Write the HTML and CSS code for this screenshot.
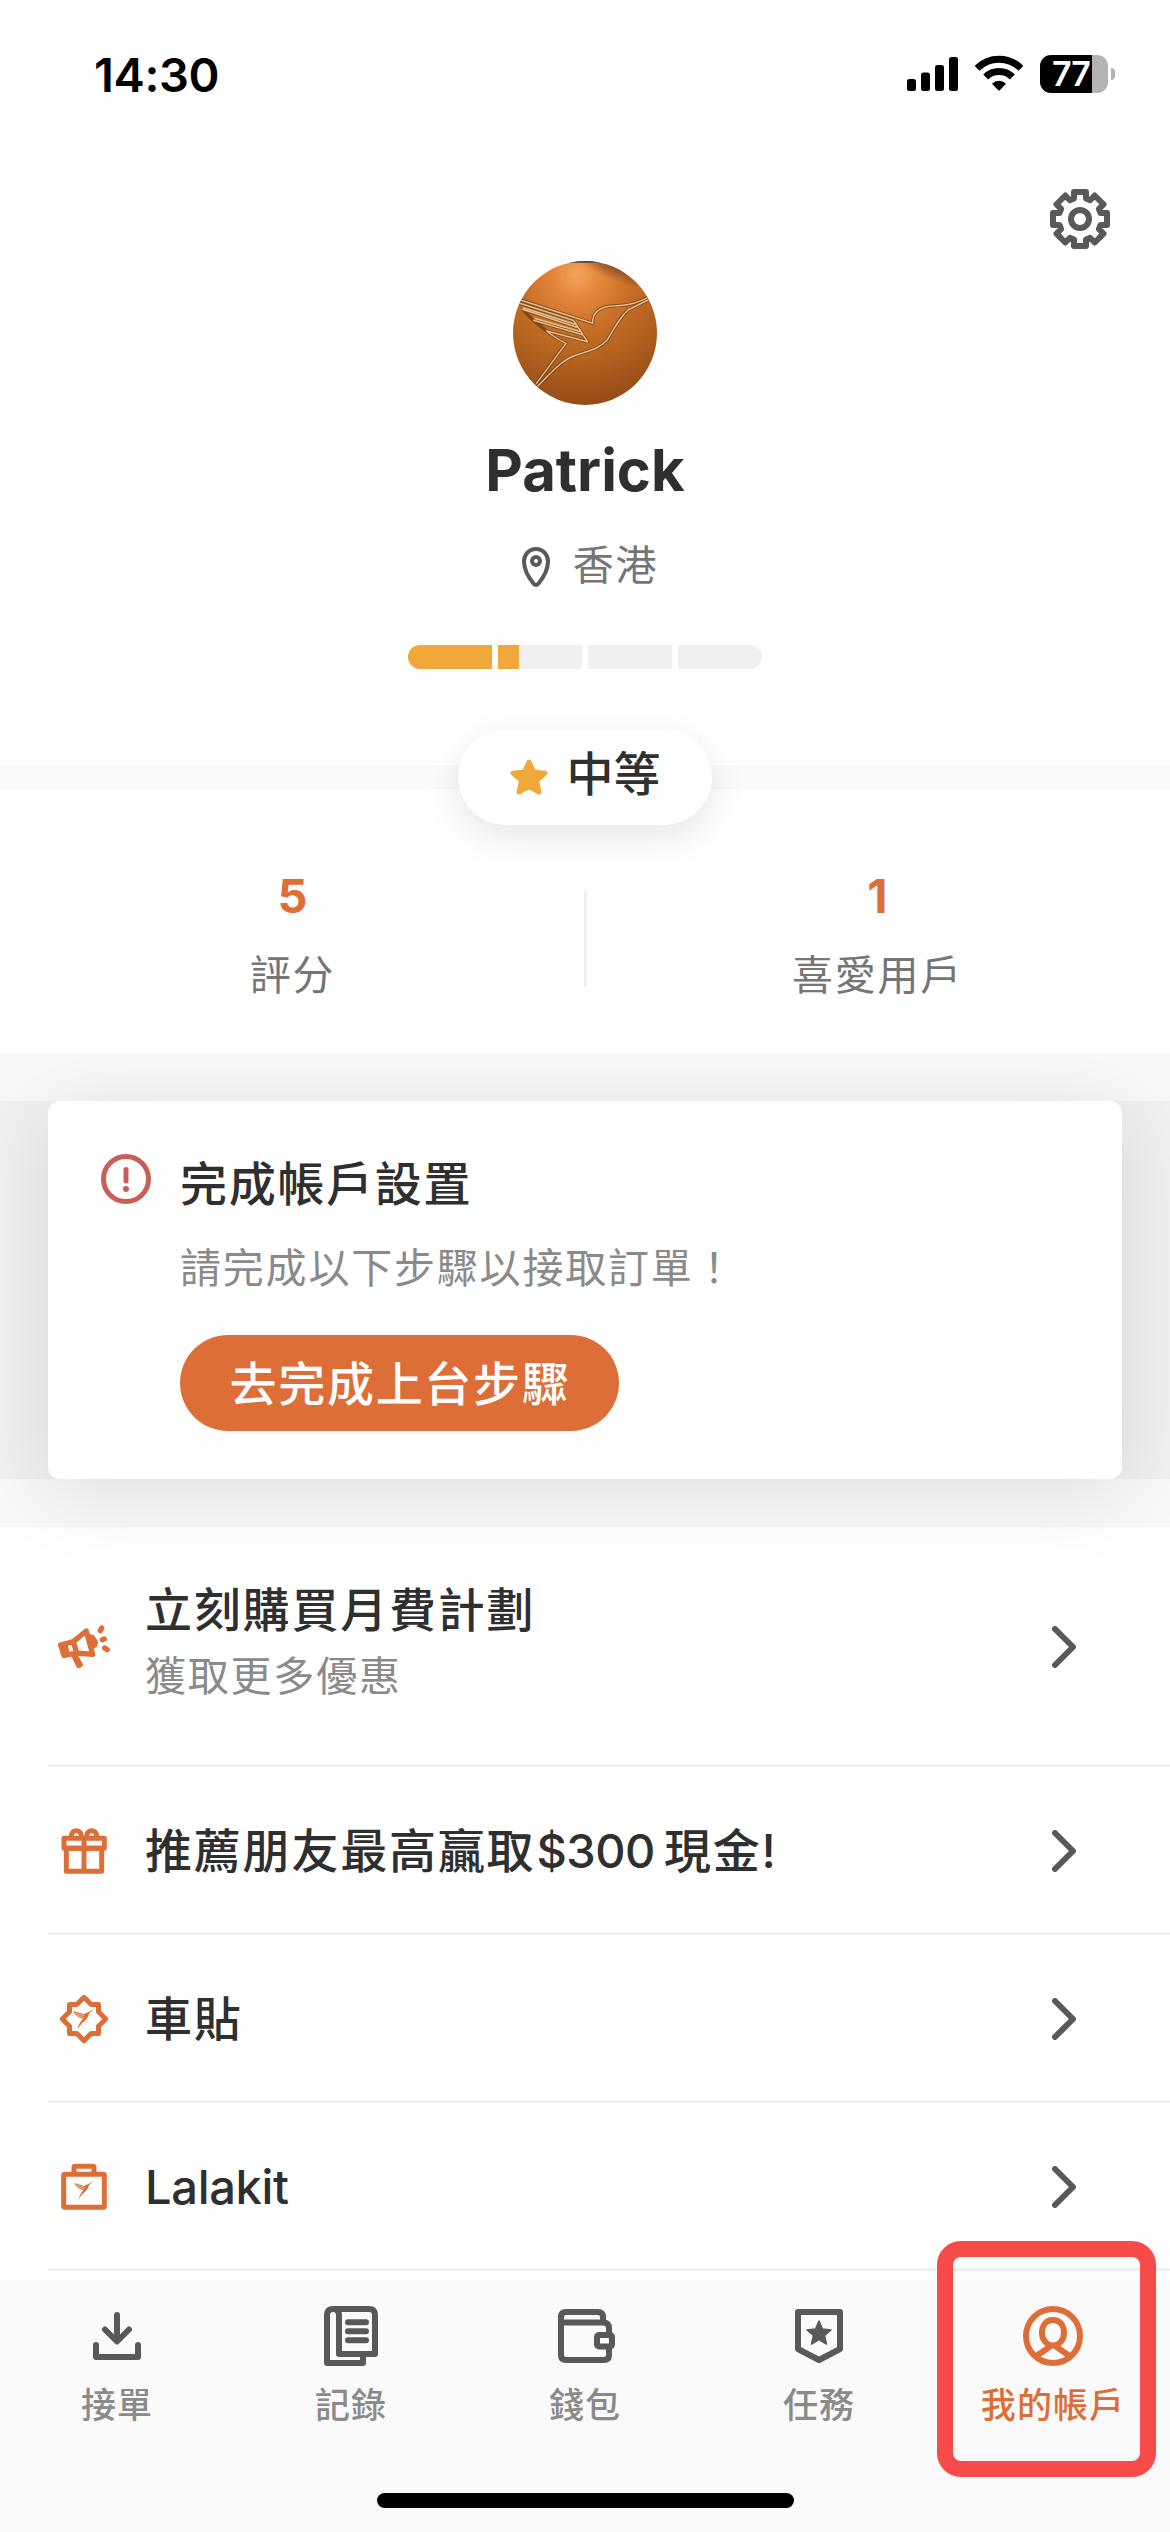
FILE: index.html
```html
<!DOCTYPE html>
<html lang="zh-HK">
<head>
<meta charset="utf-8">
<title>我的帳戶</title>
<link rel="stylesheet" href="styles.css">
</head>
<body>
<div class="screen">
  <header class="status-bar">
    <span class="clock">14:30</span>
    <div class="status-icons">
      <svg class="signal" viewBox="0 0 51 36"><rect x="0" y="23" width="9" height="12" rx="2.5"/><rect x="14" y="16.500" width="9" height="18.500" rx="2.500"/><rect x="28" y="9" width="9" height="26" rx="2.500"/><rect x="42" y="1" width="9" height="34" rx="2.500"/></svg>
      <svg class="wifi" viewBox="0 0 144 108"><path d="M6 40A93 93 0 0 1 138 40M32 66A57 57 0 0 1 112 66" fill="none" stroke="#000" stroke-width="21"/><path d="M51 86A30 30 0 0 1 93 86L75 105Q72 108 69 105Z"/></svg>
      <div class="battery"><span class="battery-body">77</span><span class="battery-tip"></span></div>
    </div>
  </header>

  <section class="profile">
    <svg class="settings" viewBox="0 0 60 60"><g transform="translate(30 30)" fill="none" stroke="#595959" stroke-width="6" stroke-linejoin="round"><path d="M-6-20.500V-27H6V-20.500L10.100-18.900L14.700-23.500L23.500-14.700L18.900-10.100L20.500-6H27V6H20.500L18.900 10.100L23.500 14.700L14.700 23.500L10.100 18.900L6 20.500V27H-6V20.500L-10.100 18.900L-14.700 23.500L-23.500 14.700L-18.900 10.100L-20.500 6H-27V-6H-20.500L-18.900-10.100L-23.500-14.700L-14.700-23.500L-10.100-18.900Z"/><circle r="9"/></g></svg>
    <svg class="avatar" viewBox="0 0 432 432">
      <defs>
        <radialGradient id="glow" gradientUnits="userSpaceOnUse" cx="192" cy="42" r="420"><stop offset="0" stop-color="#f3a55b"/><stop offset=".16" stop-color="#e5873a"/><stop offset=".38" stop-color="#c87027"/><stop offset=".65" stop-color="#b0601f"/><stop offset="1" stop-color="#8f4715"/></radialGradient>
        <radialGradient id="shade" gradientUnits="userSpaceOnUse" cx="0" cy="0" r="1" gradientTransform="translate(300 5) rotate(25) scale(150 50)"><stop offset="0" stop-color="#5a2f25" stop-opacity=".75"/><stop offset="1" stop-color="#5a2f25" stop-opacity="0"/></radialGradient>
        <clipPath id="round"><circle cx="216" cy="216" r="216"/></clipPath>
      </defs>
      <g clip-path="url(#round)">
        <rect width="432" height="432" fill="url(#glow)"/>
        <rect width="432" height="200" fill="url(#shade)"/>
        <path d="M150 0H290V5H150Z" fill="#4c4652"/>
        <g fill="none" stroke-linejoin="round">
          <path d="M20 116L239 187V177Q244 145 280 137C315 130 340 142 405 109M405 117L345 147C325 165 310 190 282 238C255 265 230 268 190 282C145 297 120 330 74 376M70 368L159 247C140 238 120 225 101 210L224 242C218 232 212 225 209 221L61 178M209 221Q204 210 196 200L28 145M196 200Q190 188 180 178L20 127M28 145L61 178L101 210" stroke="#5b2e10" stroke-width="10" opacity=".6"/>
          <path d="M20 116L239 187V177Q244 145 280 137C315 130 340 142 405 109M405 117L345 147C325 165 310 190 282 238C255 265 230 268 190 282C145 297 120 330 74 376M70 368L159 247C140 238 120 225 101 210L224 242C218 232 212 225 209 221L61 178M64 172L206 213M209 221Q204 210 196 200L28 145M30 140L192 192M196 200Q190 188 180 178L20 127" stroke="#e2bd90" stroke-width="4.500"/>
        </g>
      </g>
    </svg>
    <h1 class="name">Patrick</h1>
    <div class="place">
      <svg class="pin" viewBox="0 0 28 40" fill="none" stroke="#595959" stroke-width="4"><path d="M14 2C7 2 2 7.500 2 14.500C2 22 7 31 11.500 36.500Q14 39.500 16.500 36.500C21 31 26 22 26 14.500C26 7.500 21 2 14 2Z"/><circle cx="14" cy="14" r="4"/></svg>
      <span>香港</span>
    </div>
    <div class="progress">
      <span class="step"><span class="step-fill" style="width:100%"></span></span>
      <span class="step"><span class="step-fill" style="width:25%"></span></span>
      <span class="step"></span>
      <span class="step"></span>
    </div>
  </section>

  <div class="level-strip">
    <div class="level">
      <svg class="star" viewBox="0 0 38 36"><path d="M19 3L23.500 13L35 14.200L26.500 21.500L29 33L19 27.500L9 33L11.500 21.500L3 14.200L14.500 13Z" fill="#f1a83b" stroke="#f1a83b" stroke-width="5" stroke-linejoin="round"/></svg>
      <span>中等</span>
    </div>
  </div>

  <section class="stats">
    <div class="stat"><strong>5</strong><span>評分</span></div>
    <div class="stat"><strong>1</strong><span>喜愛用戶</span></div>
  </section>

  <section class="notice-area">
    <div class="notice-band">
      <article class="notice">
        <svg class="alert" viewBox="0 0 50 50"><circle cx="25" cy="25" r="22.500" fill="none" stroke="#c95e57" stroke-width="5"/><path d="M25 15.500V27" stroke="#c95e57" stroke-width="5" stroke-linecap="round"/><circle cx="25" cy="35" r="3" fill="#c95e57"/></svg>
        <div class="notice-body">
          <h2>完成帳戶設置</h2>
          <p>請完成以下步驟以接取訂單！</p>
          <button class="action">去完成上台步驟</button>
        </div>
      </article>
    </div>
  </section>

  <nav class="menu">
    <a class="row row-tall">
      <svg class="row-icon" viewBox="0 0 180 180" fill="none" stroke="#de6e37" stroke-width="16" stroke-linecap="round" stroke-linejoin="round"><path d="M20 84L58 74L97 42L116 112L68 108L30 115ZM58 74L68 108" /><path d="M22 84L36 80L44 112L30 114Z" fill="#de6e37" stroke-width="8"/><path d="M56 116L66 112L83 144Q76 151 71 148Z" fill="#de6e37" stroke-width="8"/><path d="M105 56Q118 54 122 66Q131 74 126 84Q125 90 114 91Z" fill="#de6e37" stroke-width="8"/><path d="M143 33L139 41M145 68L151 66M152 93L160 98"/></svg>
      <div class="row-text"><span>立刻購買月費計劃</span><small>獲取更多優惠</small></div>
      <svg class="chevron" viewBox="0 0 24 42"><path d="M3 3L21 21L3 39"/></svg>
    </a>
    <a class="row">
      <svg class="row-icon" viewBox="0 0 180 180" fill="none" stroke="#de6e37" stroke-width="15" stroke-linejoin="round"><rect x="30" y="52" width="121" height="30"/><rect x="37" y="82" width="106" height="69"/><path d="M90 52V151M52 49V45A15 16 0 0 1 82 45V49M98 49V45A15 16 0 0 1 128 45V49"/></svg>
      <div class="row-text"><span>推薦朋友最高贏取<span class="amount">$300</span>現金!</span></div>
      <svg class="chevron" viewBox="0 0 24 42"><path d="M3 3L21 21L3 39"/></svg>
    </a>
    <a class="row">
      <svg class="row-icon" viewBox="0 0 180 180"><path d="M90 25L111.500 46.500H133.500V68.500L155 90L133.500 111.500V133.500H111.500L90 155L68.500 133.500H46.500V111.500L25 90L46.500 68.500V46.500H68.500Z" fill="none" stroke="#de6e37" stroke-width="15" stroke-linejoin="round"/><path d="M58 66L91 76Q94 72 102 70L120 60L106 73Q102 88 92 96Q82 102 71 121Q73 106 83 94L87 90Q62 82 58 66Z" fill="#de6e37"/><path d="M64 72L90 80M66 78L90 86" stroke="#fff" stroke-width="1.500"/></svg>
      <div class="row-text"><span>車貼</span></div>
      <svg class="chevron" viewBox="0 0 24 42"><path d="M3 3L21 21L3 39"/></svg>
    </a>
    <a class="row">
      <svg class="row-icon" viewBox="0 0 180 180"><g fill="none" stroke="#de6e37" stroke-width="15" stroke-linejoin="round"><rect x="29" y="52" width="122" height="99" rx="3"/><path d="M60 52V31Q60 28 63 28H117Q120 28 120 31V52"/></g><g transform="translate(8 17) scale(.92)"><path d="M58 66L91 76Q94 72 102 70L120 60L106 73Q102 88 92 96Q82 102 71 121Q73 106 83 94L87 90Q62 82 58 66Z" fill="#de6e37"/><path d="M64 72L90 80M66 78L90 86" stroke="#fff" stroke-width="1.500"/></g></svg>
      <div class="row-text"><span class="latin">Lalakit</span></div>
      <svg class="chevron" viewBox="0 0 24 42"><path d="M3 3L21 21L3 39"/></svg>
    </a>
  </nav>

  <nav class="tabs">
    <a class="tab"><svg viewBox="0 0 60 60"><path d="M9 39V51H51V39M30 9V35M18 23.500L30 35.500L42 23.500"/></svg><span>接單</span></a>
    <a class="tab"><svg viewBox="0 0 60 60"><path d="M42 51V57H6V9Q6 3 12 3H48Q54 3 54 9V48H18V9Q18 3 12 3M27 16.300H45M27 25.300H45M27 34.300H45"/></svg><span>記錄</span></a>
    <a class="tab"><svg viewBox="0 0 60 60"><path d="M48 16V11Q48 6 43 6H11Q6 6 6 11V49Q6 54 11 54H49Q54 54 54 49V43M6 16.500H48Q54 16.500 54 22.500V28"/><rect x="42" y="29" width="15" height="11.500" rx="2"/></svg><span>錢包</span></a>
    <a class="tab"><svg viewBox="0 0 60 60"><path d="M9 6H51V43L30 54L9 43Z"/><path d="M30 15L33.500 23L42 24L35.500 29.500L37.500 38L30 33.500L22.500 38L24.500 29.500L18 24L26.500 23Z" fill="#595959" stroke-width="1.500"/></svg><span>任務</span></a>
    <a class="tab tab-active"><svg viewBox="0 0 60 60"><circle cx="30" cy="30" r="27"/><path d="M30 14C22.500 14 19 20 19 27C19 34 24 39.500 30 39.500C36 39.500 41 34 41 27C41 20 37.500 14 30 14ZM13.500 50L27 40.500M46.500 50L33 40.500"/></svg><span>我的帳戶</span></a>
    <div class="highlight"></div>
    <div class="home-indicator"></div>
  </nav>
</div>
</body>
</html>
```
FILE: styles.css
```css
* { box-sizing: border-box; }

body {
  margin: 0;
  background: #fff;
  color: #2f2f2f;
  font-family: Inter, "Noto Sans CJK TC", sans-serif;
}

svg { display: block; flex: none; }

.screen {
  display: flex;
  flex-direction: column;
  width: 1170px;
  height: 2532px;
  overflow: hidden;
}

/* Status bar */
.status-bar {
  display: flex;
  justify-content: space-between;
  align-items: flex-start;
  height: 189px;
  padding: 55px 55px 0 94px;
  color: #000;
}
.clock {
  font-size: 47px;
  font-weight: 600;
  line-height: 40px;
  letter-spacing: -.400px;
}
.status-icons { display: flex; }
.signal { width: 51px; height: 36px; margin: 1px 17px 0 0; }
.wifi { width: 48px; height: 36px; margin-right: 17px; }
.battery { display: flex; align-items: center; gap: 3px; }
.battery-body {
  width: 68px;
  height: 38px;
  padding-left: 12px;
  border-radius: 11px;
  background: linear-gradient(90deg, #000 52px, #b3b3b3 52px);
  color: #fff;
  font-size: 34px;
  font-weight: 600;
  line-height: 38px;
  letter-spacing: -1px;
}
.battery-tip {
  width: 4px;
  height: 12px;
  border-radius: 0 4px 4px 0;
  background: #b3b3b3;
}

/* Profile */
.profile {
  display: flex;
  flex-direction: column;
  align-items: center;
  height: 576px;
}
.settings {
  width: 60px;
  height: 60px;
  align-self: flex-end;
  margin-right: 60px;
}
.avatar { width: 144px; height: 144px; margin-top: 12px; }
.name {
  margin: 29px 0 0;
  font-size: 58px;
  font-weight: 700;
  line-height: 72px;
}
.place {
  display: flex;
  align-items: center;
  gap: 23px;
  height: 60px;
  margin-top: 31px;
  padding-left: 10px;
  color: #757575;
  font-size: 41px;
  line-height: 60px;
  letter-spacing: 1.800px;
}
.place span { margin-top: -5px; }
.pin { width: 28px; height: 40px; }
.progress {
  display: flex;
  gap: 6px;
  width: 354px;
  height: 24px;
  margin-top: 48px;
  border-radius: 12px;
  overflow: hidden;
}
.step { flex: 1; background: #f0f0f0; }
.step-fill { display: block; height: 100%; background: #f1a83b; }

/* Level */
.level-strip {
  display: flex;
  flex: none;
  justify-content: center;
  align-items: center;
  height: 24px;
  background: #fafafa;
}
.level {
  display: flex;
  flex: none;
  align-items: center;
  justify-content: center;
  gap: 19px;
  width: 254px;
  height: 96px;
  border-radius: 48px;
  background: #fff;
  box-shadow: 0 12px 36px rgba(0, 0, 0, .1);
  font-size: 47px;
  font-weight: 500;
  line-height: 66px;
  position: relative;
  z-index: 3;
}
.level span { margin-top: -6px; }
.star { width: 38px; height: 36px; }

/* Stats */
.stats {
  display: flex;
  flex: none;
  align-items: flex-start;
  height: 264px;
  padding-top: 77px;
  background: #fff;
  position: relative;
  z-index: 2;
}
.stat {
  display: flex;
  flex: 1;
  flex-direction: column;
  align-items: center;
}
.stat strong {
  color: #de6e37;
  font-size: 47px;
  font-weight: 700;
  line-height: 60px;
}
.stat span {
  margin-top: 19px;
  color: #757575;
  font-size: 41px;
  line-height: 60px;
  letter-spacing: 1.800px;
}
.stats::after {
  content: "";
  position: absolute;
  left: 584px;
  top: 102px;
  width: 3px;
  height: 96px;
  background: #f0f0f0;
}

/* Notice */
.notice-area {
  flex: none;
  padding: 48px 0;
  background: #f8f8f8;
}
.notice-band { padding: 0 48px; background: #f0f0f0; }
.notice {
  display: flex;
  gap: 29px;
  height: 378px;
  padding: 53px 53px 48px;
  border-radius: 12px;
  background: #fff;
  box-shadow: 0 12px 84px rgba(0, 0, 0, .11);
  position: relative;
  z-index: 1;
}
.alert { width: 50px; height: 50px; }
.notice-body { display: flex; flex-direction: column; align-items: flex-start; }
.notice-body h2 {
  margin: -2px 0 0;
  font-size: 47px;
  font-weight: 500;
  line-height: 64px;
  letter-spacing: 1.700px;
}
.notice-body p {
  margin: 22px 0 0;
  color: #8a8a8a;
  font-size: 41px;
  line-height: 60px;
  letter-spacing: 1.800px;
}
.action {
  flex: none;
  height: 96px;
  width: 439px;
  margin-top: 37px;
  padding: 0 0 5px 1px;
  border: 0;
  border-radius: 48px;
  background: #de6e37;
  color: #fff;
  font-family: inherit;
  font-size: 47px;
  font-weight: 500;
  letter-spacing: 1.700px;
}

/* Menu */
.menu { flex: none; height: 753px; overflow: hidden; }
.row {
  display: flex;
  align-items: center;
  height: 168px;
  margin-left: 48px;
  padding: 3px 94px 0 6px;
  border-bottom: 3px solid #f0f0f0;
}
.row-tall { height: 240px; }
.row-tall .row-text { margin-top: -8px; }
.row-icon { width: 60px; height: 60px; }
.row-text {
  display: flex;
  flex: 1;
  flex-direction: column;
  margin-left: 31px;
  font-size: 47px;
  font-weight: 500;
  line-height: 66px;
  letter-spacing: 1.800px;
}
.row-text small {
  color: #8a8a8a;
  font-size: 41px;
  font-weight: 400;
}
.latin { letter-spacing: -.300px; }
.amount { margin: 0 9px 0 1px; letter-spacing: -.500px; }
.chevron { width: 24px; height: 42px; }
.chevron path {
  fill: none;
  stroke: #595959;
  stroke-width: 6;
  stroke-linecap: round;
  stroke-linejoin: round;
}

/* Tab bar */
.tabs {
  display: flex;
  flex: none;
  height: 252px;
  padding-top: 26px;
  background: #fafafa;
  position: relative;
  z-index: 2;
}
.tab {
  display: flex;
  flex: 1;
  flex-direction: column;
  align-items: center;
  gap: 14px;
  color: #8a8a8a;
  font-size: 35px;
  font-weight: 500;
  line-height: 50px;
  letter-spacing: 1.100px;
}
.tab svg {
  width: 60px;
  height: 60px;
  fill: none;
  stroke: #595959;
  stroke-width: 6;
  stroke-linecap: round;
  stroke-linejoin: round;
}
.tab-active { color: #de6e37; }
.tab-active svg { stroke: #de6e37; }
.highlight {
  position: absolute;
  left: 937px;
  top: -39px;
  width: 219px;
  height: 236px;
  border: 16px solid #f64b48;
  border-radius: 24px;
}
.home-indicator {
  position: absolute;
  left: 377px;
  bottom: 24px;
  width: 417px;
  height: 15px;
  border-radius: 8px;
  background: #000;
}
```
